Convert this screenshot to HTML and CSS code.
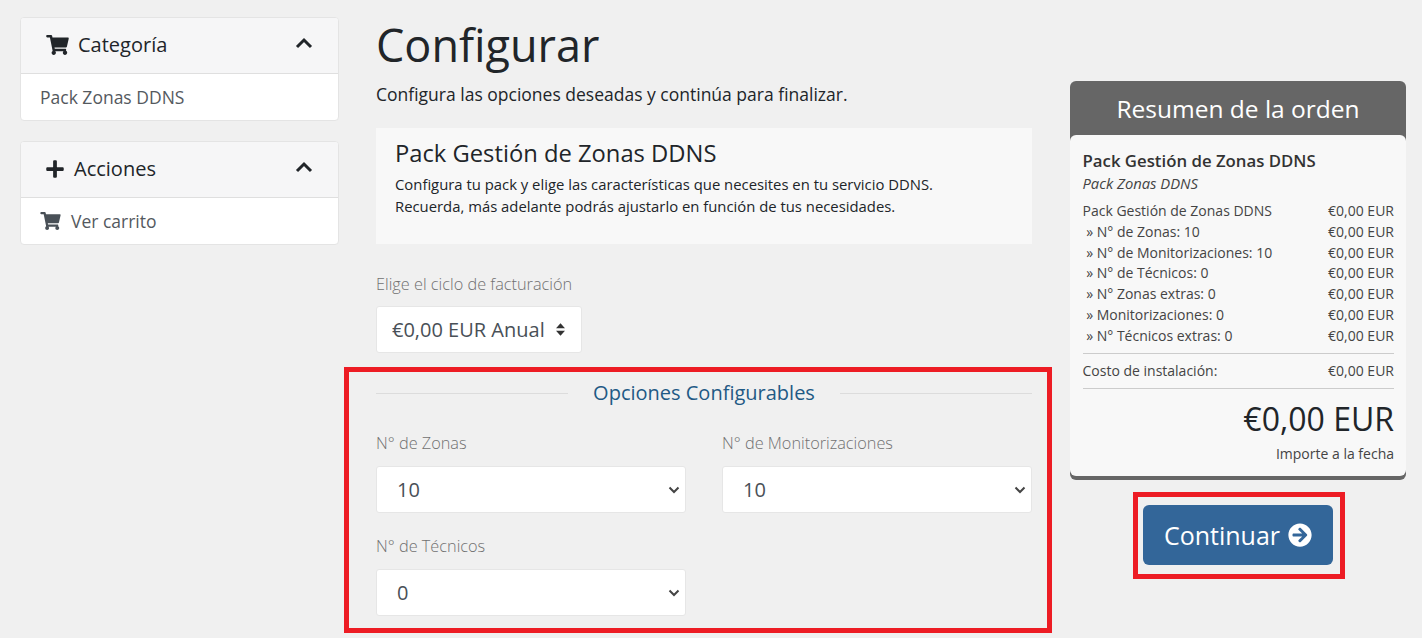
FILE: index.html
```html
<!DOCTYPE html>
<html lang="es">
<head>
    <meta charset="UTF-8">
    <meta name="viewport" content="width=device-width, initial-scale=1.0">
    <title>Configurar</title>
    <link rel="stylesheet" href="styles.css">
</head>
<body>
    <div class="page">
        <!-- Sidebar -->
        <aside class="sidebar">
            <div class="panel">
                <div class="panel-heading">
                    <svg class="icon-cart" viewBox="0 0 576 512"><path d="M528.12 301.319l47.273-208C578.806 78.301 567.391 64 551.99 64H159.208l-9.166-44.81C147.758 8.021 137.93 0 126.529 0H24C10.745 0 0 10.745 0 24v16c0 13.255 10.745 24 24 24h69.883l70.248 343.435C147.325 417.1 136 435.222 136 456c0 30.928 25.072 56 56 56s56-25.072 56-56c0-15.674-6.447-29.835-16.824-40h209.647C430.447 426.165 424 440.326 424 456c0 30.928 25.072 56 56 56s56-25.072 56-56c0-22.172-12.888-41.332-31.579-50.405l5.517-24.276c3.413-15.018-8.002-29.319-23.403-29.319H218.117l-6.545-32h293.145c11.206 0 20.92-7.754 23.403-18.681z"/></svg>
                    <span class="panel-title">Categoría</span>
                    <svg class="icon-chevron" viewBox="0 0 18 12"><path d="M2 10l7-7 7 7"/></svg>
                </div>
                <div class="panel-body">Pack Zonas DDNS</div>
            </div>
            <div class="panel">
                <div class="panel-heading">
                    <svg class="icon-plus" viewBox="0 0 448 512"><path d="M416 208H272V64c0-17.67-14.33-32-32-32h-32c-17.67 0-32 14.33-32 32v144H32c-17.67 0-32 14.33-32 32v32c0 17.67 14.33 32 32 32h144v144c0 17.67 14.33 32 32 32h32c17.67 0 32-14.33 32-32V304h144c17.67 0 32-14.33 32-32v-32c0-17.67-14.33-32-32-32z"/></svg>
                    <span class="panel-title">Acciones</span>
                    <svg class="icon-chevron" viewBox="0 0 18 12"><path d="M2 10l7-7 7 7"/></svg>
                </div>
                <div class="panel-body">
                    <svg class="icon-cart-small" viewBox="0 0 576 512"><path d="M528.12 301.319l47.273-208C578.806 78.301 567.391 64 551.99 64H159.208l-9.166-44.81C147.758 8.021 137.93 0 126.529 0H24C10.745 0 0 10.745 0 24v16c0 13.255 10.745 24 24 24h69.883l70.248 343.435C147.325 417.1 136 435.222 136 456c0 30.928 25.072 56 56 56s56-25.072 56-56c0-15.674-6.447-29.835-16.824-40h209.647C430.447 426.165 424 440.326 424 456c0 30.928 25.072 56 56 56s56-25.072 56-56c0-22.172-12.888-41.332-31.579-50.405l5.517-24.276c3.413-15.018-8.002-29.319-23.403-29.319H218.117l-6.545-32h293.145c11.206 0 20.92-7.754 23.403-18.681z"/></svg>
                    Ver carrito
                </div>
            </div>
        </aside>

        <!-- Main column -->
        <main class="main">
            <h1>Configurar</h1>
            <p class="intro">Configura las opciones deseadas y continúa para finalizar.</p>

            <div class="product-info">
                <h2>Pack Gestión de Zonas DDNS</h2>
                <p>Configura tu pack y elige las características que necesites en tu servicio DDNS.<br>
                Recuerda, más adelante podrás ajustarlo en función de tus necesidades.</p>
            </div>

            <label class="field-label billing-label" for="billing">Elige el ciclo de facturación</label>
            <div class="billing-wrap">
                <select id="billing">
                    <option>€0,00 EUR Anual</option>
                </select>
                <svg class="icon-updown" viewBox="0 0 10 14"><path d="M5 0l5 5.6H0zM5 14L0 8.4h10z"/></svg>
            </div>

            <div class="options-title"><span>Opciones Configurables</span></div>

            <div class="options-grid">
                <div class="option">
                    <label class="field-label" for="zonas">N° de Zonas</label>
                    <div class="select-wrap">
                        <select id="zonas"><option>10</option></select>
                        <svg class="icon-down" viewBox="0 0 12 8"><path d="M1.5 1.5L6 6l4.5-4.5"/></svg>
                    </div>
                </div>
                <div class="option">
                    <label class="field-label" for="monit">N° de Monitorizaciones</label>
                    <div class="select-wrap">
                        <select id="monit"><option>10</option></select>
                        <svg class="icon-down" viewBox="0 0 12 8"><path d="M1.5 1.5L6 6l4.5-4.5"/></svg>
                    </div>
                </div>
                <div class="option">
                    <label class="field-label" for="tecnicos">N° de Técnicos</label>
                    <div class="select-wrap">
                        <select id="tecnicos"><option>0</option></select>
                        <svg class="icon-down" viewBox="0 0 12 8"><path d="M1.5 1.5L6 6l4.5-4.5"/></svg>
                    </div>
                </div>
            </div>

            <!-- Red annotation -->
            <div class="mark mark-options"></div>
        </main>

        <!-- Order summary -->
        <div class="summary-col">
            <div class="summary">
                <h2 class="summary-title">Resumen de la orden</h2>
                <div class="summary-body">
                    <div class="summary-name">Pack Gestión de Zonas DDNS</div>
                    <div class="summary-group">Pack Zonas DDNS</div>
                    <div class="summary-lines">
                        <div class="line"><span>Pack Gestión de Zonas DDNS</span><span>€0,00 EUR</span></div>
                        <div class="line"><span>&nbsp;» N° de Zonas: 10</span><span>€0,00 EUR</span></div>
                        <div class="line"><span>&nbsp;» N° de Monitorizaciones: 10</span><span>€0,00 EUR</span></div>
                        <div class="line"><span>&nbsp;» N° de Técnicos: 0</span><span>€0,00 EUR</span></div>
                        <div class="line"><span>&nbsp;» N° Zonas extras: 0</span><span>€0,00 EUR</span></div>
                        <div class="line"><span>&nbsp;» Monitorizaciones: 0</span><span>€0,00 EUR</span></div>
                        <div class="line"><span>&nbsp;» N° Técnicos extras: 0</span><span>€0,00 EUR</span></div>
                    </div>
                    <div class="line setup"><span>Costo de instalación:</span><span>€0,00 EUR</span></div>
                    <div class="total">€0,00 EUR</div>
                    <div class="total-label">Importe a la fecha</div>
                </div>
            </div>
            <div class="continue-wrap">
                <button class="btn-continue">Continuar
                    <svg class="icon-arrow" viewBox="0 0 512 512"><path d="M256 8c137 0 248 111 248 248S393 504 256 504 8 393 8 256 119 8 256 8zm-28.9 143.6l75.5 72.4H120c-13.3 0-24 10.7-24 24v16c0 13.3 10.7 24 24 24h182.6l-75.5 72.4c-9.7 9.3-9.9 24.8-.4 34.3l11 10.9c9.4 9.4 24.6 9.4 33.9 0L404.3 273c9.4-9.4 9.4-24.6 0-33.9L271.6 106.3c-9.4-9.4-24.6-9.4-33.9 0l-11 10.9c-9.5 9.6-9.3 25.1.4 34.4z"/></svg>
                </button>
            </div>
        </div>
    </div>
</body>
</html>
```

FILE: styles.css
```css
* {
    box-sizing: border-box;
}
html, body {
    height: 100%;
}
body {
    margin: 0;
    background-color: #f0f0f0;
    font-family: "Open Sans", sans-serif;
    font-size: 16px;
    color: #212529;
    overflow: hidden;
}
.page {
    display: flex;
    align-items: flex-start;
    padding: 17px 16px 0 20px;
}

/* Sidebar */
.sidebar {
    width: 319px;
    flex-shrink: 0;
}
.panel {
    background-color: #fff;
    border: 1px solid #e4e4e4;
    border-radius: 4px;
    margin-bottom: 20px;
    overflow: hidden;
}
.panel-heading {
    display: flex;
    align-items: center;
    height: 56px;
    padding: 0 25px 2px;
    background-color: #f6f6f7;
    border-bottom: 1px solid #dfdfdf;
    font-size: 20px;
    color: #212529;
}
.panel-title {
    flex: 1;
    margin-left: 10px;
}
.icon-cart {
    width: 23px;
    height: 20px;
    margin-right: -1px;
    fill: #212529;
}
.icon-plus {
    width: 18px;
    height: 20px;
    fill: #212529;
}
.icon-chevron {
    width: 18px;
    height: 12px;
    margin-top: -4px;
    fill: none;
    stroke: #212529;
    stroke-width: 3;
}
.panel-body {
    display: flex;
    align-items: center;
    height: 46px;
    padding: 0 19px;
    font-size: 17.5px;
    color: #54595e;
}
.icon-cart-small {
    width: 21px;
    height: 18px;
    margin-right: 10px;
    fill: #495057;
}

/* Main column */
.main {
    position: relative;
    width: 656px;
    flex-shrink: 0;
    margin-left: 37px;
}
h1 {
    margin: 0;
    font-size: 45px;
    font-weight: 400;
    line-height: 56px;
    color: #212529;
}
.intro {
    margin: 7px 0 0;
    font-size: 17.5px;
    line-height: 28px;
}
.product-info {
    height: 116px;
    margin-top: 20px;
    padding: 9px 19px;
    background-color: #f8f8f8;
}
.product-info h2 {
    margin: 0;
    font-size: 23.75px;
    font-weight: 400;
    line-height: 32px;
}
.product-info p {
    margin: 4px 0 0;
    font-size: 14.85px;
    line-height: 22px;
}
.field-label {
    display: block;
    font-size: 16.3px;
    font-weight: 300;
    line-height: 24px;
    color: #707070;
}
.billing-label {
    margin-top: 28px;
}
.billing-wrap {
    position: relative;
    width: 206px;
    margin-top: 10px;
}
.icon-updown {
    position: absolute;
    top: 17px;
    right: 17px;
    width: 9px;
    height: 13px;
    fill: #333;
    pointer-events: none;
}
select {
    width: 100%;
    height: 47px;
    padding: 0 15px;
    background-color: #fff;
    border: 1px solid #e6e6e6;
    border-radius: 3px;
    font-family: "Open Sans", sans-serif;
    font-size: 20px;
    color: #495057;
    appearance: none;
}
.options-title {
    display: flex;
    align-items: center;
    gap: 25px;
    margin-top: 27px;
    font-size: 20px;
    line-height: 26px;
    color: #1f5a85;
}
.options-title::before,
.options-title::after {
    content: "";
    flex: 1;
    height: 1px;
    background-color: #dcdcdc;
}
.options-grid {
    display: grid;
    grid-template-columns: 310px 310px;
    column-gap: 36px;
    row-gap: 21px;
    margin-top: 25px;
}
.select-wrap {
    position: relative;
    margin-top: 11px;
}
.select-wrap select {
    padding-left: 20px;
}
.icon-down {
    position: absolute;
    top: 20px;
    right: 6px;
    width: 12px;
    height: 8px;
    fill: none;
    stroke: #444;
    stroke-width: 2;
    pointer-events: none;
}
.mark {
    position: absolute;
    border: 5px solid #ed1c24;
    pointer-events: none;
}
.mark-options {
    left: -32px;
    top: 350px;
    width: 708px;
    height: 266px;
}

/* Order summary */
.summary-col {
    width: 336px;
    flex-shrink: 0;
    margin-left: 38px;
    margin-top: 64px;
}
.summary {
    background-color: #666;
    border-radius: 6px;
    padding-bottom: 4px;
}
.summary-title {
    margin: 0;
    height: 54px;
    font-size: 24.5px;
    font-weight: 400;
    line-height: 56px;
    text-align: center;
    color: #fff;
}
.summary-body {
    padding: 14px 12px 12px 12.5px;
    background-color: #f8f8f8;
    border-radius: 6px;
    font-size: 14px;
    color: #444;
}
.summary-name {
    font-size: 16.8px;
    font-weight: 600;
    line-height: 24px;
    color: #333;
}
.summary-group {
    margin-top: -1px;
    font-size: 14.8px;
    font-style: italic;
    line-height: 22px;
}
.summary-lines {
    margin-top: 7px;
    padding-bottom: 6px;
    border-bottom: 1px solid #ccc;
}
.line {
    display: flex;
    justify-content: space-between;
    line-height: 20.8px;
}
.setup {
    padding: 7px 0;
    border-bottom: 1px solid #ccc;
}
.total {
    margin-top: 10px;
    font-size: 32px;
    line-height: 40px;
    text-align: right;
    color: #212529;
}
.total-label {
    margin-top: 5px;
    line-height: 20px;
    text-align: right;
}
.continue-wrap {
    width: 212px;
    height: 87px;
    margin: 12px 0 0 63px;
    padding: 8px 5px;
    border: 5px solid #ed1c24;
}
.btn-continue {
    display: flex;
    align-items: center;
    justify-content: center;
    gap: 8px;
    width: 190px;
    height: 60px;
    border: none;
    border-radius: 6px;
    background-color: #336699;
    font-family: "Open Sans", sans-serif;
    font-size: 25px;
    color: #fff;
}
.icon-arrow {
    width: 24px;
    height: 24px;
    fill: #fff;
}
```
